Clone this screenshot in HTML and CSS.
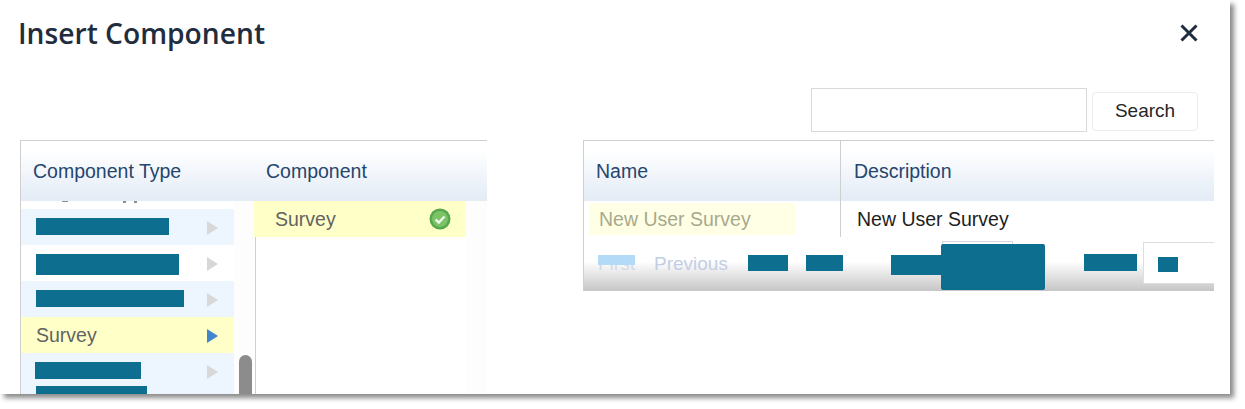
FILE: index.html
```html
<!DOCTYPE html>
<html lang="en">
<head>
<meta charset="utf-8">
<title>Insert Component</title>
<link rel="stylesheet" href="styles.css">
</head>
<body>
<div class="dialog">
  <header class="head">
    <h1 class="title">Insert Component</h1>
    <svg class="close" viewBox="0 0 18 18" width="18" height="18"><path d="M1.5 1.5 16.5 16.5M16.5 1.5 1.5 16.5"/></svg>
  </header>
  <div class="search">
    <input class="search-input" type="text" aria-label="Search">
    <button class="search-btn" type="button">Search</button>
  </div>
  <div class="panels">
    <section class="picker">
      <div class="thead">
        <div class="th th-type">Component Type</div>
        <div class="th th-comp">Component</div>
      </div>
      <div class="picker-body">
        <div class="type-col">
          <div class="strip"><i class="speck s1"></i><i class="speck s2"></i><i class="speck s3"></i></div>
          <div class="type alt"><i class="bar b133"></i><b class="arrow"></b></div>
          <div class="type"><i class="bar b143"></i><b class="arrow"></b></div>
          <div class="type alt"><i class="bar b148"></i><b class="arrow"></b></div>
          <div class="type selected"><span>Survey</span><b class="arrow on"></b></div>
          <div class="type alt"><i class="bar b106"></i><b class="arrow"></b></div>
          <div class="type alt"><i class="bar b111"></i></div>
        </div>
        <div class="scroll"><div class="thumb"></div></div>
        <div class="comp-col">
          <div class="comp selected">
            <span>Survey</span>
            <svg class="ok" viewBox="0 0 22 22" width="22" height="22">
              <circle cx="11" cy="11" r="10.5" fill="#55a84c"/>
              <circle cx="11" cy="11" r="8" fill="#7cc266"/>
              <path d="M6.5 11.5 9.8 14.5 15.5 8.5" fill="none" stroke="#eef8ea" stroke-width="2.4"/>
            </svg>
          </div>
          <div class="comp-rest"></div>
        </div>
        <div class="gutter"></div>
      </div>
    </section>
    <section class="results">
      <div class="thead">
        <div class="th th-name">Name</div>
        <div class="th th-desc">Description</div>
      </div>
      <div class="row">
        <div class="cell-name"><span class="name-chip">New User Survey</span></div>
        <div class="cell-desc">New User Survey</div>
      </div>
      <div class="pager">
        <span class="pg first">First<i class="first-mask"></i></span>
        <span class="pg prev">Previous</span>
        <i class="bar p40"></i>
        <i class="bar p37"></i>
        <div class="pg-input">
          <i class="bar p60"></i>
          <div class="pg-box"></div>
          <i class="bar pbig"></i>
        </div>
        <i class="bar p53"></i>
        <div class="pg-size"><i class="bar p20"></i></div>
      </div>
    </section>
  </div>
</div>
</body>
</html>
```
FILE: styles.css
```css
* { box-sizing: border-box; }
html, body { margin: 0; padding: 0; background: #fff; }
body { width: 1245px; height: 409px; overflow: hidden; font-family: "Liberation Sans", Arial, sans-serif; }

.dialog {
  width: 1230px;
  height: 394px;
  background: #fff;
  overflow: hidden;
  padding: 0 16px 0 20px;
  box-shadow: 4px 4px 5px 0 #8a8a8a;
}

.head { height: 88px; display: flex; justify-content: space-between; align-items: flex-start; }
.title {
  margin: 14px 0 0 -2px;
  font: 600 28.2px/38px "Open Sans", sans-serif;
  color: #1f2d3f;
}
.close { margin: 24px 16px 0 0; }
.close path { fill: none; stroke: #1f2d3f; stroke-width: 3; }

.search { display: flex; justify-content: flex-end; align-items: flex-start; gap: 5px; height: 52px; padding-right: 16px; }
.search-input { width: 276px; height: 44px; border: 1px solid #d9d9d9; background: #fff; padding: 0; }
.search-btn {
  width: 106px; height: 39px; margin-top: 4px;
  border: 1px solid #ececec; border-radius: 4px; background: #fff;
  font: 19px "Liberation Sans", Arial, sans-serif; color: #262626; padding: 0 0 2px;
}

.panels { display: grid; grid-template-columns: 467px 631px; column-gap: 96px; align-items: start; }

.thead {
  height: 61px;
  display: flex;
  border-top: 1px solid #cfcfcf;
  background: linear-gradient(#fff 15%, #e4ecf6 95%);
}
.th { font-size: 19.5px; line-height: 60px; color: #24466f; }

.picker { border-left: 1px solid #cfcfcf; height: 254px; }
.th-type { width: 233px; padding-left: 12px; }
.th-comp { padding-left: 12px; }

.picker-body { display: flex; height: 193px; }
.type-col { width: 213px; overflow: hidden; height: 193px; }

.strip { height: 8px; display: flex; align-items: flex-start; }
.speck { display: block; height: 1px; background: #8a8e94; }
.s1 { width: 6px; margin-left: 41px; }
.s2 { width: 3px; margin-left: 55px; height: 2px; }
.s3 { width: 3px; margin-left: 8px; height: 2px; }

.type {
  height: 36px;
  display: flex; align-items: center; justify-content: space-between;
  padding: 0 16px 0 15px;
  font-size: 19.5px;
  color: #636363;
}
.type.alt { background: #edf5fe; }
.type.selected, .comp.selected { background: #ffffc8; }

.bar { display: block; background: #0e6e90; }
.b133 { width: 133px; height: 17px; margin-top: -1px; }
.b143 { width: 143px; height: 21px; margin-top: 3px; }
.b148 { width: 148px; height: 17px; margin-top: -1px; }
.b106 { width: 106px; height: 17px; margin: -1px 0 0 -1px; }
.b111 { width: 111px; height: 17px; align-self: flex-start; margin-top: -3px; }

.arrow { width: 0; height: 0; margin-top: 2px; border-left: 11px solid #d8d8d8; border-top: 7px solid transparent; border-bottom: 7px solid transparent; }
.arrow.on { border-left-color: #3f86cf; }

.scroll { width: 20px; padding: 154px 0 0 5px; background: #fdfdfd; flex: none; }
.thumb { width: 13px; height: 50px; border-radius: 7px 7px 0 0; background: #8c8c8c; }

.comp-col { width: 212px; display: flex; flex-direction: column; }
.comp {
  height: 36px;
  display: flex; align-items: center; justify-content: space-between;
  padding: 0 15px 0 21px;
  font-size: 19.5px; color: #636363;
}
.comp-rest { flex: 1; margin-left: 1px; border-left: 1px solid #cfcfcf; }
.gutter { width: 21px; background: #fdfdfd; }

.results { border-left: 1px solid #cfcfcf; }
.th-name { width: 257px; padding-left: 12px; border-right: 1px solid #cfcfcf; }
.th-desc { padding-left: 13px; }

.row { display: flex; height: 36px; font-size: 19.5px; }
.cell-name { width: 257px; padding: 2px 0 2px 5px; border-right: 1px solid #cfcfcf; }
.name-chip {
  display: block; width: 206px; height: 32px; line-height: 32px; padding-left: 10px;
  background: #ffffe6; color: #a8a98c; border-radius: 2px;
}
.cell-desc { padding-left: 16px; line-height: 36px; color: #1d1d1d; }

.pager {
  height: 54px;
  display: flex; align-items: flex-start;
  padding-left: 14px;
  background: linear-gradient(#fff 45%, #c6c6c6 100%);
  font-size: 19px; line-height: 54px; color: #c3cde5;
}
.pg { display: block; }
.first { position: relative; width: 37px; color: #d4d9e8; }
.first-mask { position: absolute; left: 0; top: 18px; width: 37px; height: 10px; background: #b3daf7; }
.prev { margin-left: 19px; width: 75px; }

.p40 { width: 40px; height: 16px; margin: 18px 0 0 19px; }
.p37 { width: 37px; height: 16px; margin: 18px 0 0 18px; }
.pg-input { position: relative; width: 154px; height: 54px; margin-left: 48px; }
.p60 { width: 60px; height: 20px; margin-top: 18px; }
.pg-box { position: absolute; left: 51px; top: 4px; width: 71px; height: 40px; border: 1px solid #d6d6d6; background: #fff; }
.pbig { position: absolute; left: 50px; top: 7px; width: 104px; height: 46px; border-radius: 2px; }
.p53 { width: 53px; height: 17px; margin: 17px 0 0 39px; }
.pg-size { width: 71px; height: 42px; margin: 5px 0 0 6px; padding: 14px 0 0 14px; background: #fff; border: 1px solid #dedede; border-right: 0; }
.p20 { width: 20px; height: 15px; }
```
